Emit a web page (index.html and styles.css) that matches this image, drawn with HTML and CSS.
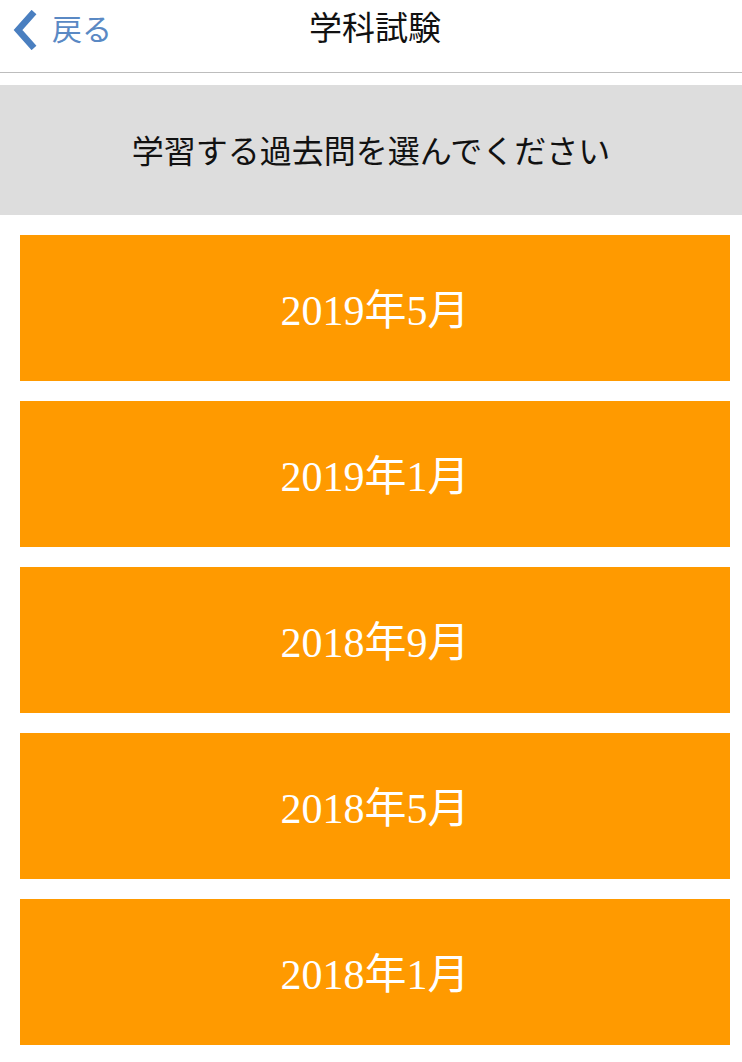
FILE: index.html
```html
<!DOCTYPE html>
<html lang="ja">
<head>
<meta charset="utf-8">
<title>学科試験</title>
<link rel="stylesheet" href="styles.css">
</head>
<body>
<header class="nav">
  <a class="back" href="#">
    <svg class="chev" width="26" height="40" viewBox="0 0 26 40"><path d="M22 2 L6 20 L22 38" fill="none" stroke="#4a7fc0" stroke-width="6.5"/></svg>
    <span class="back-text">戻る</span>
  </a>
  <h1 class="title">学科試験</h1>
</header>
<div class="banner">学習する過去問を選んでください</div>
<ul class="list">
  <li class="item">2019年5月</li>
  <li class="item">2019年1月</li>
  <li class="item">2018年9月</li>
  <li class="item">2018年5月</li>
  <li class="item">2018年1月</li>
</ul>
</body>
</html>
```
FILE: styles.css
```css
html, body {
  margin: 0;
  padding: 0;
  background: #ffffff;
  font-family: "Liberation Serif", "Noto Sans CJK JP", serif;
}
.nav {
  position: relative;
  height: 72px;
  border-bottom: 1px solid #bdbdbd;
  display: flex;
  align-items: center;
  justify-content: center;
}
.back {
  position: absolute;
  left: 12px;
  top: 10px;
  display: flex;
  align-items: center;
  text-decoration: none;
  color: #5a89c4;
}
.chev {
  display: block;
  margin-right: 14px;
}
.back-text {
  font-size: 30px;
  line-height: 40px;
  color: #5a89c4;
}
.title {
  margin: 0 0 14px 8px;
  font-size: 33px;
  font-weight: normal;
  color: #111;
  line-height: 40px;
}
.banner {
  margin-top: 12px;
  height: 130px;
  background: #dddddd;
  display: flex;
  align-items: center;
  justify-content: center;
  font-size: 32px;
  color: #111;
  padding-bottom: 3px;
  box-sizing: border-box;
}
.list {
  list-style: none;
  margin: 0;
  padding: 20px 12px 0 20px;
  display: flex;
  flex-direction: column;
  gap: 20px;
}
.item {
  height: 146px;
  background: #ff9a00;
  color: #ffffff;
  font-size: 42px;
  display: flex;
  align-items: center;
  justify-content: center;
  padding-bottom: 3px;
  box-sizing: border-box;
}
```
